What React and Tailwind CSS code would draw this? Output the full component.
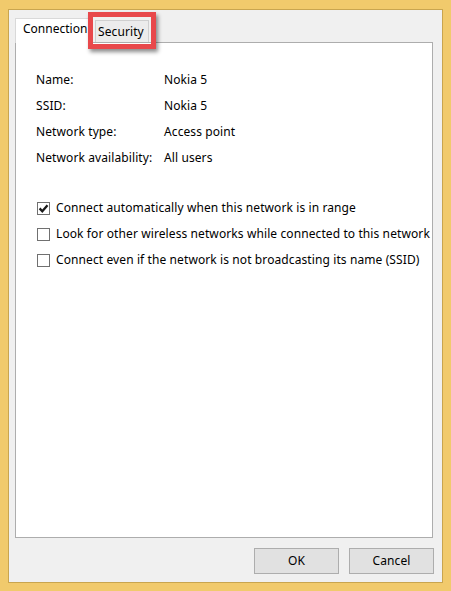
import React from "react";

function Check({ checked }) {
  return (
    <span className="w-[13px] h-[13px] border border-[#707070] bg-white flex items-center justify-center shrink-0">
      {checked && (
        <svg width="11" height="11" viewBox="0 0 11 11">
          <path d="M1.6 5.4 L4.3 8.2 L9.5 2.3" fill="none" stroke="#1a1a1a" strokeWidth="2.3" />
        </svg>
      )}
    </span>
  );
}

export default function App() {
  const font = { fontFamily: '"Noto Sans", "Open Sans", sans-serif' };
  const rows = [
    ["Name:", "Nokia 5"],
    ["SSID:", "Nokia 5"],
    ["Network type:", "Access point"],
    ["Network availability:", "All users"],
  ];
  const checks = [
    [true, "Connect automatically when this network is in range"],
    [false, "Look for other wireless networks while connected to this network"],
    [false, "Connect even if the network is not broadcasting its name (SSID)"],
  ];
  return (
    <div className="w-[451px] h-[591px] bg-[#f1ca6c] pl-[8px] pr-[8px] pt-[9px] pb-[8px] text-[12px] text-black tracking-[0.1px]" style={font}>
      <div className="relative h-full border border-[#c9a54f] bg-[#f0f0f0] pl-[6px] pr-[9px] pt-[8px] flex flex-col">
        <div className="flex items-end h-[25px] relative z-10">
          <div className="h-[25px] w-[75px] bg-white border border-b-0 border-[#d9d9d9] pl-[7px] leading-[20px] tracking-normal">Connection</div>
          <div className="h-[22px] w-[54px] ml-[5px] mb-[1px] bg-[#ececec] border border-b-0 border-[#cfcfcf] pl-[2px] leading-[22px]">Security</div>
        </div>
        <div className="-mt-px h-[496px] border border-[#adadad] bg-white pl-[20px] pt-[24px]">
          {rows.map(([a, b]) => (
            <div key={a} className="flex leading-[26px] h-[26px]">
              <span className="w-[128px]">{a}</span>
              <span>{b}</span>
            </div>
          ))}
          <div className="mt-[24px] flex flex-col">
            {checks.map(([c, t]) => (
              <div key={t} className="flex items-center h-[26px] pl-[1px] gap-[6px] whitespace-nowrap">
                <Check checked={c} />
                <span>{t}</span>
              </div>
            ))}
          </div>
        </div>
        <div className="flex justify-end gap-[10px] mt-[10px] -mr-[1px]">
          <button className="w-[85px] h-[26px] bg-[#e1e1e1] border border-[#adadad]" style={font}>OK</button>
          <button className="w-[85px] h-[26px] bg-[#e1e1e1] border border-[#adadad]" style={font}>Cancel</button>
        </div>
        <div className="absolute left-[79px] top-[2px] w-[68px] h-[37px] border-[5px] border-[#e8484b] shadow-[2px_3px_4px_rgba(0,0,0,0.45)] z-20" />
      </div>
    </div>
  );
}
